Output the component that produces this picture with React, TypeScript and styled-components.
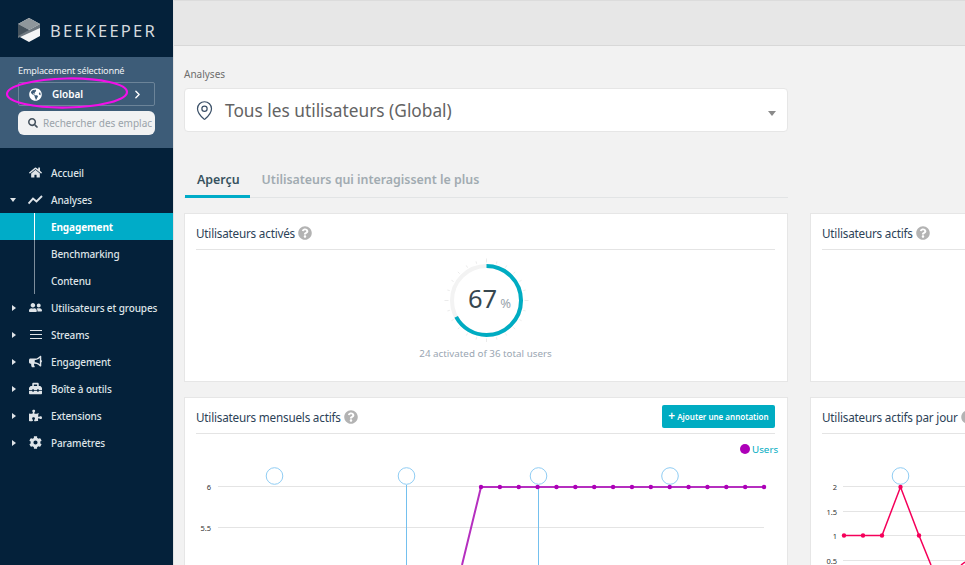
import styled, { createGlobalStyle } from 'styled-components'
import { MapPin } from 'lucide-react'
import {
  FaBullhorn,
  FaCog,
  FaGlobeAmericas,
  FaHome,
  FaPuzzlePiece,
  FaQuestionCircle,
  FaSearch,
  FaToolbox,
  FaUserFriends,
} from 'react-icons/fa'
import { FiChevronRight } from 'react-icons/fi'
import type { ReactNode } from 'react'

const FONT = `'Noto Sans', 'Open Sans', sans-serif`

const GlobalStyle = createGlobalStyle`
  html, body {
    margin: 0;
    height: 100%;
    overflow: hidden;
    background: #f2f2f2;
    font-family: ${FONT};
  }
  * {
    box-sizing: border-box;
  }
`

const Page = styled.div`
  position: relative;
  display: flex;
  width: 965px;
  height: 565px;
  overflow: hidden;
`

const Sidebar = styled.aside`
  flex: 0 0 173px;
  background: #04213a;
  color: #e4e8ec;
`

const Brand = styled.div`
  height: 57px;
  display: flex;
  align-items: center;
  gap: 8px;
  padding: 3px 0 0 16px;
`

const BrandName = styled.span`
  font-size: 16.5px;
  letter-spacing: 2.2px;
  color: #d5dade;
`

const LocationPanel = styled.section`
  height: 91px;
  background: #3d5c78;
  padding: 8px 18px 0;
`

const LocationLabel = styled.div`
  font-size: 9.2px;
  letter-spacing: -0.2px;
  line-height: 12px;
  color: #eef1f4;
`

const LocationButton = styled.div`
  margin-top: 5px;
  height: 24px;
  display: flex;
  align-items: center;
  padding: 0 10px 0 10px;
  border: 1px solid #6c8499;
  border-radius: 2px;
  color: #fff;
  font-size: 10px;
  font-weight: 600;
`

const LocationName = styled.span`
  flex: 1;
  margin-left: 10px;
`

const SearchBox = styled.div`
  margin-top: 5px;
  height: 24px;
  width: 137px;
  display: flex;
  align-items: center;
  gap: 5px;
  padding-left: 10px;
  border-radius: 6px;
  background: #f1f2f3;
  color: #46535f;
  font-size: 10px;
  white-space: nowrap;
  overflow: hidden;
`

const SearchText = styled.span`
  color: #9aa3aa;
`

const Nav = styled.nav`
  padding-top: 11px;
`

const NavRow = styled.div<{ $active?: boolean; $sub?: boolean }>`
  position: relative;
  height: 27px;
  display: flex;
  align-items: center;
  padding-left: ${p => (p.$sub ? '51px' : '0')};
  background: ${p => (p.$active ? '#00acc8' : 'transparent')};
  color: ${p => (p.$active ? '#fff' : '#dfe4e8')};
  font-size: 10px;
  letter-spacing: -0.12px;
  font-weight: ${p => (p.$active ? 700 : 500)};

  &::before {
    content: '';
    display: ${p => (p.$sub ? 'block' : 'none')};
    position: absolute;
    left: 34px;
    top: 0;
    bottom: 0;
    width: 1px;
    background: ${p => (p.$active ? '#fff' : '#7d8d9b')};
  }
`

const Caret = styled.span<{ $open?: boolean; $hidden?: boolean }>`
  width: 0;
  height: 0;
  margin-left: ${p => (p.$open ? '10px' : '12px')};
  margin-right: 12px;
  visibility: ${p => (p.$hidden ? 'hidden' : 'visible')};
  border-style: solid;
  border-color: transparent;
  border-width: ${p => (p.$open ? '4px 3px 0 3px' : '3px 0 3px 4px')};
  border-top-color: ${p => (p.$open ? '#dfe4e8' : 'transparent')};
  border-left-color: ${p => (p.$open ? 'transparent' : '#dfe4e8')};
  flex: none;
`

const NavIcon = styled.span`
  width: 15px;
  margin-right: 8px;
  display: flex;
  justify-content: center;
  color: #dfe4e8;
  font-size: 13px;
  flex: none;
`

const Main = styled.main`
  flex: 1;
  min-width: 0;
  border-left: 1px solid #e2e2e2;
  overflow: hidden;
`

const TopBar = styled.header`
  height: 46px;
  background: #e7e7e7;
  border-top: 1px solid #dcdcdc;
  border-bottom: 1px solid #d8d8d8;
`

const Content = styled.div`
  width: 1250px;
  padding: 22px 0 0 10px;
`

const Crumb = styled.div`
  font-size: 10px;
  line-height: 13px;
  color: #6d6d6d;
`

const Selector = styled.div`
  margin-top: 7px;
  width: 604px;
  height: 44px;
  display: flex;
  align-items: center;
  padding: 0 12px 0 9px;
  background: #fff;
  border: 1px solid #e6e6e6;
  border-radius: 4px;
  color: #3b5068;
`

const SelectorText = styled.span`
  flex: 1;
  margin-left: 10px;
  font-size: 17.3px;
  color: #636363;
`

const SelectorCaret = styled.span`
  width: 0;
  height: 0;
  margin-top: 7px;
  margin-right: -1px;
  border-style: solid;
  border-color: #8a8a8a transparent transparent;
  border-width: 5px 4.5px 0;
`

const Tabs = styled.div`
  margin-top: 38px;
  width: 604px;
  height: 28px;
  display: flex;
  padding-left: 1px;
  border-bottom: 1px solid #e2e4e5;
`

const Tab = styled.div<{ $active?: boolean }>`
  height: 28px;
  padding: 0 10px 0 12px;
  font-size: 12.4px;
  font-weight: 600;
  line-height: 20px;
  color: ${p => (p.$active ? '#37525f' : '#a1abb1')};
  border-bottom: ${p => (p.$active ? '3px solid #00acc8' : '0')};
`

const Grid = styled.div`
  margin-top: 15px;
  display: grid;
  grid-template-columns: 604px 604px;
  column-gap: 22px;
  row-gap: 15px;
`

const Card = styled.section<{ $height: number }>`
  height: ${p => p.$height}px;
  padding: 0 12px 0 11px;
  background: #fff;
  border: 1px solid #e6e6e6;
`

const CardHeader = styled.div`
  height: 36px;
  display: flex;
  align-items: center;
  justify-content: space-between;
  padding-top: 3px;
  border-bottom: 1px solid #e4e4e4;
`

const CardTitle = styled.h3`
  margin: 0;
  display: flex;
  align-items: center;
  gap: 3px;
  font-size: 11.7px;
  letter-spacing: -0.2px;
  font-weight: 400;
  color: #2c4257;
`

const Help = styled(FaQuestionCircle)`
  color: #b3b3b3;
  font-size: 14px;
`

const AddButton = styled.button`
  height: 23px;
  width: 113px;
  margin-top: -2px;
  display: flex;
  align-items: center;
  justify-content: center;
  gap: 2px;
  padding: 0;
  border: 0;
  border-radius: 2px;
  background: #00acc2;
  color: #fff;
  font-family: ${FONT};
  font-size: 8px;
  font-weight: 600;
  white-space: nowrap;
`

const PlusMark = styled.span`
  font-size: 12px;
  line-height: 12px;
`

const GaugeBody = styled.div`
  display: flex;
  flex-direction: column;
  align-items: center;
  padding-top: 8px;
`

const GaugeBox = styled.div`
  position: relative;
  width: 90px;
  height: 84px;
`

const GaugeValue = styled.div`
  position: absolute;
  left: 0;
  right: 0;
  top: 23px;
  padding-left: 8px;
  display: flex;
  justify-content: center;
  align-items: baseline;
  font-size: 25.5px;
  line-height: 34px;
  color: #37474f;
`

const GaugeUnit = styled.span`
  margin-left: 3px;
  font-size: 13px;
  color: #9aa5ad;
`

const GaugeCaption = styled.div`
  margin-top: 5px;
  font-size: 9.8px;
  line-height: 13px;
  color: #9aa6b2;
`

const Chart = styled.svg`
  display: block;
  margin-left: -12px;
  overflow: visible;
`

const AxisLabel = styled.text`
  font-family: ${FONT};
  font-size: 7.5px;
  fill: #333;
  text-anchor: end;
`

const LegendLabel = styled.text`
  font-family: ${FONT};
  font-size: 9.8px;
  fill: #00acc2;
`

const Ellipse = styled.svg`
  position: absolute;
  left: 0;
  top: 69px;
  pointer-events: none;
`

const Logo = () => (
  <svg width="26" height="26" viewBox="0 0 26 26">
    <polygon points="13,1 24,7 24,19 13,25 2,19 2,7" fill="#f4f5f6" />
    <polygon points="24,7 24,11 2,21 2,7 13,13" fill="#6d777f" />
    <polygon points="13,1 24,7 13,13 2,7" fill="#8f979c" />
    <polygon points="2,7 13,13 2,19" fill="#46535d" />
  </svg>
)

const TrendIcon = () => (
  <svg width="15" height="10" viewBox="0 0 15 10" fill="none" stroke="currentColor" strokeWidth="1.9">
    <polyline points="0.5,8.5 5,3.5 8.5,6.5 14,1" />
  </svg>
)

const BarsIcon = () => (
  <svg width="12" height="11" viewBox="0 0 12 11" fill="none" stroke="currentColor" strokeWidth="1">
    <path d="M0 1.5h12M0 5.5h12M0 9.5h12" />
  </svg>
)

type NavEntry = { label: string; icon: ReactNode; open?: boolean; leaf?: boolean }

const topEntries: NavEntry[] = [
  { label: 'Accueil', icon: <FaHome />, leaf: true },
  { label: 'Analyses', icon: <TrendIcon />, open: true },
]

const subEntries = ['Engagement', 'Benchmarking', 'Contenu']

const bottomEntries: NavEntry[] = [
  { label: 'Utilisateurs et groupes', icon: <FaUserFriends /> },
  { label: 'Streams', icon: <BarsIcon /> },
  { label: 'Engagement', icon: <FaBullhorn /> },
  { label: 'Boîte à outils', icon: <FaToolbox /> },
  { label: 'Extensions', icon: <FaPuzzlePiece /> },
  { label: 'Paramètres', icon: <FaCog /> },
]

const renderEntry = (entry: NavEntry) => (
  <NavRow key={entry.label}>
    <Caret $open={entry.open} $hidden={entry.leaf} />
    <NavIcon>{entry.icon}</NavIcon>
    {entry.label}
  </NavRow>
)

function Gauge() {
  const cx = 45.5
  const cy = 42.5
  const r = 34.5
  const ticks = Array.from({ length: 24 }, (_, i) => (i * Math.PI * 2) / 24)
  return (
    <svg width="90" height="84" viewBox="0 0 90 84">
      {ticks.map((a, i) => {
        const r1 = 38
        const r2 = i % 6 === 0 ? 42 : 40.5
        return (
          <line
            key={i}
            x1={cx + Math.sin(a) * r1}
            y1={cy - Math.cos(a) * r1}
            x2={cx + Math.sin(a) * r2}
            y2={cy - Math.cos(a) * r2}
            stroke="#e6e6e6"
            strokeWidth="0.8"
          />
        )
      })}
      <circle cx={cx} cy={cy} r={r} fill="none" stroke="#f3f3f3" strokeWidth="4" />
      <circle
        cx={cx}
        cy={cy}
        r={r}
        fill="none"
        stroke="#00acc2"
        strokeWidth="4"
        strokeDasharray={`${2 * Math.PI * r * 0.67} ${2 * Math.PI * r}`}
        transform={`rotate(-90 ${cx} ${cy})`}
      />
    </svg>
  )
}

// y values below are relative to the top of the chart area (page y - 434)
const GRID_TOP = 53
const annotation = (x: number, withStem: boolean, bottom: number) => (
  <g key={x} fill="none" stroke="#90cdf4">
    {withStem && <line x1={x} y1={GRID_TOP - 2} x2={x} y2={bottom} stroke="#74c0ee" />}
    <circle cx={x} cy={GRID_TOP - 11} r="8.3" fill="#fff" />
  </g>
)

const monthlyDots = Array.from({ length: 16 }, (_, i) => 297 + i * 18.87)

function MonthlyChart() {
  const pts = monthlyDots.map(x => `${x},${GRID_TOP}`).join(' ')
  return (
    <Chart width="604" height="131" viewBox="0 0 604 131">
      <line x1="34" x2="580" y1={GRID_TOP - 0.5} y2={GRID_TOP - 0.5} stroke="#e4e4e4" />
      <line x1="34" x2="580" y1={GRID_TOP + 40.5} y2={GRID_TOP + 40.5} stroke="#e4e4e4" />
      <AxisLabel x="27" y={GRID_TOP + 3}>6</AxisLabel>
      <AxisLabel x="27" y={GRID_TOP + 43.5}>5.5</AxisLabel>
      {annotation(90.5, false, 131)}
      {annotation(222.5, true, 131)}
      {annotation(354.5, true, 131)}
      {annotation(486, false, 131)}
      <polyline points={`278,131 ${pts}`} fill="none" stroke="#b52fbf" strokeWidth="2" />
      {monthlyDots.map(x => (
        <circle key={x} cx={x} cy={GRID_TOP} r="2.2" fill="#ad00b8" />
      ))}
      <circle cx="561" cy="15" r="5" fill="#ad00b8" />
      <LegendLabel x="568" y="19">Users</LegendLabel>
    </Chart>
  )
}

const dailyPoints: [number, number][] = [
  [34, 101.5],
  [53, 101.5],
  [72, 101.5],
  [90.5, 53],
  [109, 101.5],
]

function DailyChart() {
  const pts = dailyPoints.map(p => p.join(',')).join(' ')
  return (
    <Chart width="604" height="131" viewBox="0 0 604 131">
      {[52.5, 77.5, 101.5, 126.5].map(y => (
        <line key={y} x1="33" x2="604" y1={y} y2={y} stroke="#e4e4e4" />
      ))}
      <AxisLabel x="27" y="56">2</AxisLabel>
      <AxisLabel x="27" y="80.5">1.5</AxisLabel>
      <AxisLabel x="27" y="105">1</AxisLabel>
      <AxisLabel x="27" y="129.5">0.5</AxisLabel>
      {annotation(90.5, false, 131)}
      <polyline points={`${pts} 121,131`} fill="none" stroke="#f5005a" strokeWidth="1.5" />
      <polyline points="151,131 155,128" fill="none" stroke="#f5005a" strokeWidth="1.5" />
      {dailyPoints.map(([x, y]) => (
        <circle key={x} cx={x} cy={y} r="2.2" fill="#f5005a" />
      ))}
    </Chart>
  )
}

function App() {
  return (
    <Page>
      <GlobalStyle />
      <Sidebar>
        <Brand>
          <Logo />
          <BrandName>BEEKEEPER</BrandName>
        </Brand>
        <LocationPanel>
          <LocationLabel>Emplacement sélectionné</LocationLabel>
          <LocationButton>
            <FaGlobeAmericas size={13} />
            <LocationName>Global</LocationName>
            <FiChevronRight size={13} strokeWidth={2.6} />
          </LocationButton>
          <SearchBox>
            <FaSearch size={10} />
            <SearchText>Rechercher des emplac</SearchText>
          </SearchBox>
        </LocationPanel>
        <Nav>
          {topEntries.map(renderEntry)}
          {subEntries.map((label, i) => (
            <NavRow key={label} $sub $active={i === 0}>
              {label}
            </NavRow>
          ))}
          {bottomEntries.map(renderEntry)}
        </Nav>
      </Sidebar>
      <Main>
        <TopBar />
        <Content>
          <Crumb>Analyses</Crumb>
          <Selector>
            <MapPin size={21} strokeWidth={1.4} />
            <SelectorText>Tous les utilisateurs (Global)</SelectorText>
            <SelectorCaret />
          </Selector>
          <Tabs>
            <Tab $active>Aperçu</Tab>
            <Tab>Utilisateurs qui interagissent le plus</Tab>
          </Tabs>
          <Grid>
            <Card $height={169}>
              <CardHeader>
                <CardTitle>
                  Utilisateurs activés <Help />
                </CardTitle>
              </CardHeader>
              <GaugeBody>
                <GaugeBox>
                  <Gauge />
                  <GaugeValue>
                    67<GaugeUnit>%</GaugeUnit>
                  </GaugeValue>
                </GaugeBox>
                <GaugeCaption>24 activated of 36 total users</GaugeCaption>
              </GaugeBody>
            </Card>
            <Card $height={169}>
              <CardHeader>
                <CardTitle>
                  Utilisateurs actifs <Help />
                </CardTitle>
              </CardHeader>
            </Card>
            <Card $height={300}>
              <CardHeader>
                <CardTitle>
                  Utilisateurs mensuels actifs <Help />
                </CardTitle>
                <AddButton>
                  <PlusMark>+</PlusMark> Ajouter une annotation
                </AddButton>
              </CardHeader>
              <MonthlyChart />
            </Card>
            <Card $height={300}>
              <CardHeader>
                <CardTitle>
                  Utilisateurs actifs par jour <Help />
                </CardTitle>
              </CardHeader>
              <DailyChart />
            </Card>
          </Grid>
        </Content>
      </Main>
      <Ellipse width="140" height="48" viewBox="0 0 140 48">
        <ellipse cx="67" cy="24" rx="60" ry="14.5" fill="none" stroke="#f20fe8" strokeWidth="2.2" transform="rotate(-1 67 24)" />
      </Ellipse>
    </Page>
  )
}

export default App
